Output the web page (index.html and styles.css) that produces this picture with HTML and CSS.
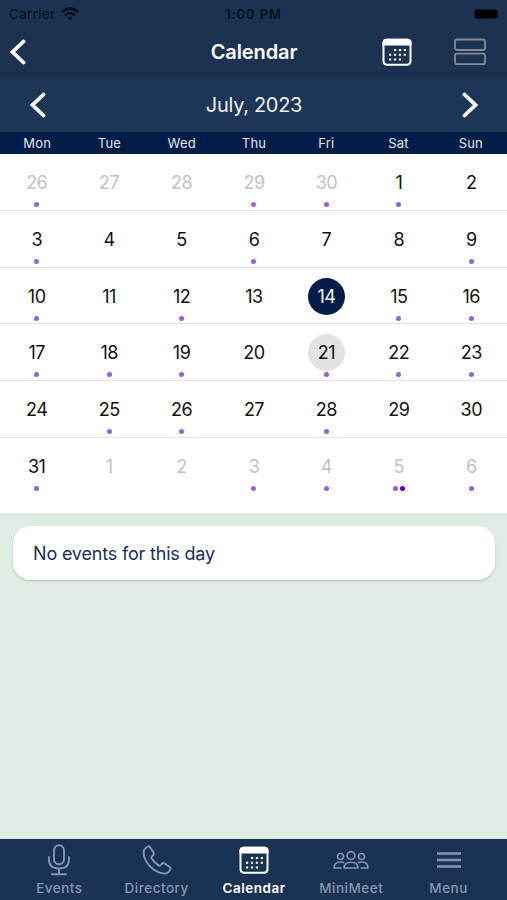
FILE: index.html
```
<!DOCTYPE html>
<html lang="en">
<head>
    <meta charset="UTF-8">
    <meta name="viewport" content="width=device-width, initial-scale=1.0">
    <title>Calendar</title>
    <link rel="stylesheet" href="styles.css">
</head>
<body>
    <svg class="sprite" width="0" height="0">
        <symbol id="icon-calendar" viewBox="0 0 30 28">
            <rect x="1.5" y="1.7" width="27" height="25" rx="3.4" fill="none" stroke="currentColor" stroke-width="2"/>
            <path d="M.5 7.500V4.500Q.5 .7 4.300 .7H25.700Q29.500 .7 29.500 4.500V7.500Z" fill="currentColor"/>
            <path d="M12 12H24.500M7 16.800H24.500M7 21.600H19.200" fill="none" stroke="currentColor" stroke-width="2" stroke-dasharray="2.200 2.700"/>
        </symbol>
        <symbol id="icon-chevron" viewBox="0 0 16 26">
            <path d="M13.500 2.500L2.500 13L13.500 23.500" fill="none" stroke="currentColor" stroke-width="3.800" stroke-linecap="round"/>
        </symbol>
    </svg>

    <div class="app">
        <div class="top">
            <div class="status-bar">
                <div class="carrier">
                    <span>Carrier</span>
                    <svg width="18" height="14" viewBox="0 0 18 14">
                        <g fill="none" stroke="currentColor" stroke-width="2.500">
                            <path d="M1 5.200Q9 -2.200 17 5.200"/>
                            <path d="M4 8.400Q9 3.800 14 8.400"/>
                        </g>
                        <path d="M6.300 10.700Q9 8.500 11.700 10.700L9 13.500Z" fill="currentColor"/>
                    </svg>
                </div>
                <div class="time">1:00 PM</div>
                <div class="battery"></div>
            </div>
            <div class="header">
                <svg class="chevron" width="16" height="26"><use href="#icon-chevron"/></svg>
                <h1>Calendar</h1>
                <div class="views">
                    <svg width="30" height="28"><use href="#icon-calendar"/></svg>
                    <svg class="list-icon" width="32" height="28" viewBox="0 0 32 28" fill="none" stroke="currentColor" stroke-width="1.800">
                        <rect x="1" y="1.500" width="30" height="10.500" rx="2"/>
                        <rect x="1" y="15.700" width="30" height="10.500" rx="2"/>
                    </svg>
                </div>
            </div>
        </div>

        <div class="month-bar">
            <svg class="chevron" width="16" height="26"><use href="#icon-chevron"/></svg>
            <h2>July, 2023</h2>
            <svg class="chevron next" width="16" height="26"><use href="#icon-chevron"/></svg>
        </div>
        <div class="weekdays">
            <span>Mon</span><span>Tue</span><span>Wed</span><span>Thu</span><span>Fri</span><span>Sat</span><span>Sun</span>
        </div>
        <div class="month" id="month"></div>

        <div class="agenda">
            <div class="card">No events for this day</div>
        </div>

        <div class="tabs">
            <div class="tab">
                <svg width="24" height="32" viewBox="0 0 24 32" fill="none" stroke="currentColor" stroke-width="1.900" stroke-linecap="round">
                    <rect x="7" y="1.200" width="10" height="19" rx="5"/>
                    <path d="M2 13V15.500Q2 24.500 12 24.500Q22 24.500 22 15.500V13M12 24.500V30M5 30.200H19"/>
                </svg>
                <span>Events</span>
            </div>
            <div class="tab">
                <svg width="30" height="30" viewBox="0 0 30 30" fill="none" stroke="currentColor" stroke-width="1.900" stroke-linejoin="round">
                    <path d="M6 1.500C2.800 3 1.300 5 1.600 8.500C2.500 17.500 11.500 27 21 28.400C24.500 28.900 27 27.200 28.400 24.300C28.800 23.400 28.500 22.600 27.700 22L22.700 18.500C21.700 17.900 20.700 18 20 18.700L18.600 20.200C18 20.800 17.300 20.900 16.600 20.400C13.600 18.600 11.200 16.200 9.600 13.300C9.200 12.600 9.300 12 9.900 11.400L11.300 10C12 9.300 12 8.300 11.400 7.300L8.100 2.200C7.500 1.300 6.800 1.100 6 1.500Z"/>
                </svg>
                <span>Directory</span>
            </div>
            <div class="tab active">
                <svg width="30" height="28"><use href="#icon-calendar"/></svg>
                <span>Calendar</span>
            </div>
            <div class="tab">
                <svg width="36" height="20" viewBox="0 0 36 20" fill="none" stroke="currentColor" stroke-width="1.600" stroke-linejoin="round">
                    <circle cx="18" cy="5.500" r="3.900"/>
                    <circle cx="7.500" cy="6.500" r="3"/>
                    <circle cx="28.500" cy="6.500" r="3"/>
                    <path d="M11 18Q11 12.300 18 12.300Q25 12.300 25 18Z"/>
                    <path d="M11 12.700Q9.800 12 7.500 12Q1 12 1 18H8.500M25 12.700Q26.200 12 28.500 12Q35 12 35 18H27.500"/>
                </svg>
                <span>MiniMeet</span>
            </div>
            <div class="tab">
                <svg width="26" height="18" viewBox="0 0 26 18" fill="none" stroke="currentColor" stroke-width="2.300">
                    <path d="M1 2.500H25M1 9H25M1 15.500H25"/>
                </svg>
                <span>Menu</span>
            </div>
        </div>
    </div>

    <script>
        const first = new Date(2023, 5, 26);
        const month = 6;
        const selected = '6-14';
        const today = '6-21';
        // events per day, keyed by month-day
        const events = {
            '5-26': 1, '5-29': 1, '5-30': 1, '6-1': 1, '6-3': 1, '6-6': 1, '6-9': 1,
            '6-10': 1, '6-12': 1, '6-15': 1, '6-16': 1, '6-17': 1, '6-18': 1, '6-19': 1,
            '6-21': 1, '6-22': 1, '6-23': 1, '6-25': 1, '6-26': 1, '6-28': 1, '6-31': 1,
            '7-3': 1, '7-4': 1, '7-5': 2, '7-6': 1
        };

        let html = '';
        for (let i = 0; i < 42; i++) {
            const date = new Date(first.getFullYear(), first.getMonth(), first.getDate() + i);
            const key = `${date.getMonth()}-${date.getDate()}`;
            let cls = 'day';
            if (date.getMonth() !== month) cls += ' other';
            if (key === selected) cls += ' selected';
            if (key === today) cls += ' today';
            html += `
                <div class="${cls}">
                    <span class="number">${date.getDate()}</span>
                    <div class="dots">${'<i></i>'.repeat(events[key] || 0)}</div>
                </div>
            `;
        }
        document.getElementById('month').innerHTML = html;
    </script>
</body>
</html>
```

FILE: styles.css
```
* { box-sizing: border-box; }
body { margin: 0; font-family: Inter, "Liberation Sans", sans-serif; }
h1, h2 { margin: 0; }
svg { display: block; flex: none; }
.sprite { position: absolute; }

.app { display: flex; flex-direction: column; height: 900px; background: #dfece1; }

.top { height: 79px; background: #1b3351; color: #fff; }
.status-bar { display: grid; grid-template-columns: 1fr auto 1fr; align-items: center; height: 27px; padding: 0 9px; color: #07111d; font-size: 13.5px; }
.carrier { display: flex; align-items: center; gap: 6px; letter-spacing: 0.3px; }
.time { font-weight: 600; font-size: 13px; letter-spacing: 0.9px; }
.battery { justify-self: end; width: 24px; height: 10px; border-radius: 3px; background: #000; border: 1px solid #0c1826; }

.header { display: grid; grid-template-columns: 1fr auto 1fr; align-items: center; height: 50px; padding: 0 21px 0 10px; }
.header h1 { font-size: 20px; font-weight: 600; letter-spacing: -0.1px; padding-left: 12px; }
.views { display: flex; justify-content: flex-end; gap: 42px; }
.list-icon { color: #848d98; }

.month-bar { display: flex; justify-content: space-between; align-items: center; height: 53px; padding: 0 29px 1px 30px; background: #1d3557; color: #fff; }
.month-bar h2 { font-size: 20px; font-weight: 400; letter-spacing: -0.3px; color: #eef1f5; }
.next { transform: scaleX(-1); }

.weekdays { display: grid; grid-template-columns: repeat(7, 1fr); align-items: center; height: 22px; padding-left: 1px; background: #001d47; color: #e2e6ec; font-size: 13px; letter-spacing: 0.2px; text-align: center; }

.month { display: grid; grid-template-columns: repeat(7, 1fr); grid-template-rows: repeat(5, 56.8px) 75.5px; background: #fff; }
.day { display: flex; flex-direction: column; align-items: center; padding: 10px 0 0 1px; border-bottom: 1px solid #e4e4e6; color: #111; }
.day:nth-last-child(-n+7) { border-bottom: none; }
.number { width: 37px; height: 37px; border-radius: 50%; font-size: 18px; line-height: 37px; text-align: center; letter-spacing: -0.5px; }
.other { color: #c2c2c4; }
.selected .number { background: #001d47; color: #fff; }
.today .number { background: #e2e2e2; }
.dots { display: flex; gap: 2px; padding-top: 1px; }
.dots i { width: 5px; height: 5px; border-radius: 50%; background: #9661d6; }
.dots i + i { background: #4a00e0; }

.agenda { flex: 1; padding: 13px 12px 13px 13px; }
.card { height: 54px; padding: 0 20px; border-radius: 17px; background: #fff; box-shadow: 0 1px 2px rgba(0, 0, 0, 0.22); color: #1b2d55; font-size: 18px; line-height: 55px; letter-spacing: -0.18px; }

.tabs { display: grid; grid-template-columns: repeat(5, 97.3px); justify-content: center; height: 61px; padding-left: 1px; background: #1a3353; color: #8496b2; }
.tab { display: grid; grid-template-rows: 32px 22px; place-items: center; padding-top: 5px; align-content: start; font-size: 13.5px; font-weight: 500; letter-spacing: 0.5px; }
.tab span { padding-top: 2px; }
.active { color: #fff; font-weight: 600; letter-spacing: 0.5px; }
```
